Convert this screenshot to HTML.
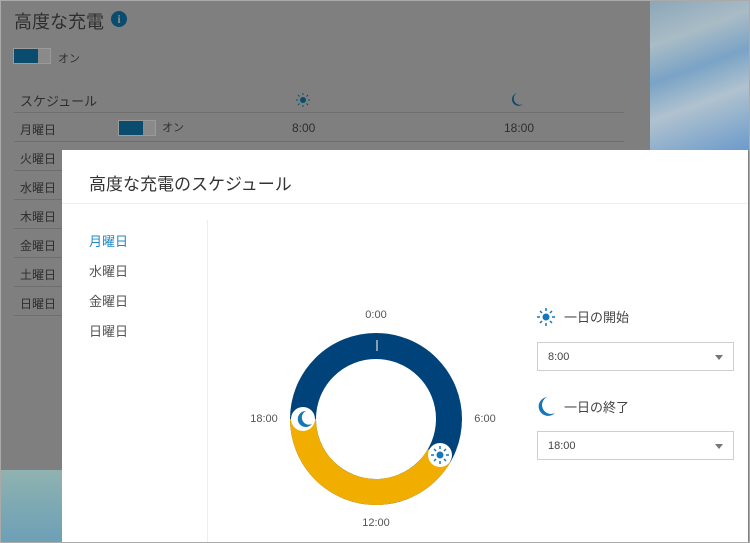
<!DOCTYPE html>
<html><head><meta charset="utf-8"><style>
*{margin:0;padding:0;box-sizing:border-box}
body{width:750px;height:543px;overflow:hidden;position:relative;background:#7f7f7f;font-family:"Liberation Sans","Noto Sans CJK JP",sans-serif;color:#3a3a3a}
.abs{position:absolute}
.bg{color:#2e2e2e}
.sw{position:absolute;width:38px;height:16px;border:1px solid #9a9a9a;background:#8a8a8a}
.sw i{position:absolute;left:0;top:0;width:24px;height:14px;background:#0a4c6e}
.row{position:absolute;left:14px;width:610px;border-bottom:1px solid #6e6e6e;height:29px;font-size:12px}
.row span{position:absolute;top:8px;left:6px}
.sel{position:absolute;left:537px;width:197px;height:29px;border:1px solid #cfcfcf;background:#fff;font-size:11px;color:#444;padding:8px 0 0 10px}
.sel:after{content:"";position:absolute;right:10px;top:12px;border-left:4px solid transparent;border-right:4px solid transparent;border-top:5px solid #777}
</style></head><body>
<div class="abs" style="left:650px;top:0;width:100px;height:151px;background:linear-gradient(160deg,#8aa6b8 0%,#a9bcc6 25%,#7aa3c6 45%,#b0c2cf 65%,#6a9acb 100%)"></div>
<div class="abs" style="left:0;top:470px;width:62px;height:73px;background:linear-gradient(180deg,#8fb3b0,#7aa7b4 60%,#6d9fb6)"></div>
<div class="abs bg" style="left:14px;top:8px;font-size:18px">高度な充電</div>
<div class="abs" style="left:111px;top:11px;width:16px;height:16px;border-radius:50%;background:#0a4c6e;color:#8a8a8a;font:bold 12px 'Liberation Serif',serif;text-align:center;line-height:16px">i</div>
<div class="sw" style="left:13px;top:48px"><i></i></div>
<div class="abs bg" style="left:58px;top:50px;font-size:11px">オン</div>
<div class="row bg" style="top:84px"><span style="font-size:13px;left:6px;top:7px">スケジュール</span></div>
<div class="row bg" style="top:113px"><span>月曜日</span><span style="left:148px;font-size:11px;top:6px">オン</span><span style="left:278px">8:00</span><span style="left:490px">18:00</span></div>
<div class="sw" style="left:118px;top:120px"><i></i></div>
<div class="row bg" style="top:142px"><span>火曜日</span></div>
<div class="row bg" style="top:171px"><span>水曜日</span></div>
<div class="row bg" style="top:200px"><span>木曜日</span></div>
<div class="row bg" style="top:229px"><span>金曜日</span></div>
<div class="row bg" style="top:258px"><span>土曜日</span></div>
<div class="row bg" style="top:287px"><span>日曜日</span></div>
<svg class="abs" style="left:0;top:0" width="650" height="150">
<circle cx="303" cy="100" r="3" fill="#0a4c6e"/>
<g stroke="#0a4c6e" stroke-width="1"><line x1="303" y1="93" x2="303" y2="95"/><line x1="303" y1="105" x2="303" y2="107"/><line x1="296" y1="100" x2="298" y2="100"/><line x1="308" y1="100" x2="310" y2="100"/><line x1="298" y1="95" x2="299.5" y2="96.5"/><line x1="306.5" y1="103.5" x2="308" y2="105"/><line x1="308" y1="95" x2="306.5" y2="96.5"/><line x1="298" y1="105" x2="299.5" y2="103.5"/></g>
<path d="M517 93 A6.5 6.5 0 1 0 523 104 A5.5 5.5 0 0 1 517 93Z" fill="#0a4c6e"/>
</svg>

<div class="abs" style="left:62px;top:150px;width:686px;height:393px;background:#fff">
  <div class="abs" style="left:27px;top:20px;font-size:17px;color:#333">高度な充電のスケジュール</div>
  <div class="abs" style="left:0;top:53px;width:686px;border-top:1px solid #eee"></div>
  <div class="abs" style="left:145px;top:70px;height:323px;border-left:1px solid #eee"></div>
  <div class="abs" style="left:27px;top:81px;font-size:13px;color:#1f8ac0">月曜日</div>
  <div class="abs" style="left:27px;top:111px;font-size:13px;color:#555">水曜日</div>
  <div class="abs" style="left:27px;top:141px;font-size:13px;color:#555">金曜日</div>
  <div class="abs" style="left:27px;top:171px;font-size:13px;color:#555">日曜日</div>
</div>
<svg class="abs" style="left:0;top:0" width="750" height="543">
<circle cx="376" cy="419" r="73" fill="none" stroke="#00437a" stroke-width="26"/>
<path d="M439.2 455.5 A73 73 0 0 1 303 419" fill="none" stroke="#f1ad00" stroke-width="26"/>
<line x1="377" y1="340" x2="377" y2="351" stroke="#ddd" stroke-width="1.2"/>
<circle cx="303" cy="419" r="12" fill="#fff"/>
<path d="M306 411 A8 8 0 1 0 312 424 A7 7 0 0 1 306 411Z" fill="#1576b8"/>
<circle cx="440" cy="455" r="12" fill="#fff"/>
<circle cx="440" cy="455" r="3.5" fill="#1576b8"/>
<g stroke="#1576b8" stroke-width="1.5"><line x1="440" y1="446" x2="440" y2="449"/><line x1="440" y1="461" x2="440" y2="464"/><line x1="431" y1="455" x2="434" y2="455"/><line x1="446" y1="455" x2="449" y2="455"/><line x1="434" y1="449" x2="436" y2="451"/><line x1="444" y1="459" x2="446" y2="461"/><line x1="446" y1="449" x2="444" y2="451"/><line x1="434" y1="461" x2="436" y2="459"/></g>
<circle cx="546" cy="317" r="3.5" fill="#1576b8"/>
<g stroke="#1576b8" stroke-width="1.5"><line x1="546" y1="308" x2="546" y2="311"/><line x1="546" y1="323" x2="546" y2="326"/><line x1="537" y1="317" x2="540" y2="317"/><line x1="552" y1="317" x2="555" y2="317"/><line x1="540" y1="311" x2="542" y2="313"/><line x1="550" y1="321" x2="552" y2="323"/><line x1="552" y1="311" x2="550" y2="313"/><line x1="540" y1="323" x2="542" y2="321"/></g>
<path d="M547 397 A9.5 9.5 0 1 0 555 413 A8 8 0 0 1 547 397Z" fill="#1576b8"/>
<g font-family="Liberation Sans,sans-serif" font-size="11" fill="#555" text-anchor="middle">
<text x="376" y="318">0:00</text><text x="485" y="422">6:00</text><text x="376" y="526">12:00</text><text x="264" y="422">18:00</text></g>
<rect x="0.5" y="0.5" width="749" height="542" fill="none" stroke="#aaa"/>
</svg>
<div class="abs" style="left:564px;top:307px;font-size:13px;color:#444">一日の開始</div>
<div class="abs" style="left:564px;top:397px;font-size:13px;color:#444">一日の終了</div>
<div class="sel" style="top:342px">8:00</div>
<div class="sel" style="top:431px">18:00</div>
</body></html>
